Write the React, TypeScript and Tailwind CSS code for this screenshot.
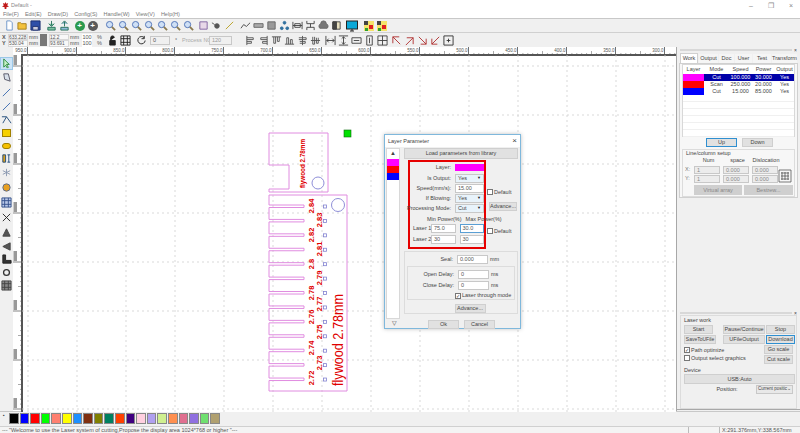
import type { ReactNode } from 'react'

type IconProps = { d?: string; fill?: string; stroke?: string; children?: ReactNode }

// 12x12 toolbar glyph
function Ico({ d, fill = 'none', stroke = '#33507a', children }: IconProps) {
  return (
    <svg viewBox="0 0 12 12" className="w-[11px] h-[11px]" fill={fill} stroke={stroke} strokeWidth={1}>
      {d && <path d={d} />}
      {children}
    </svg>
  )
}

function Slot({ children, className = '' }: { children?: ReactNode; className?: string }) {
  return <div className={`w-[13px] h-[13px] flex items-center justify-center shrink-0 ${className}`}>{children}</div>
}

function Zoom() {
  return (
    <Ico stroke="#4a6fb5">
      <circle cx="5" cy="5" r="3.4" fill="#cfe0f5" />
      <path d="M7.5 7.5 L11 11" strokeWidth={2} stroke="#8a7a50" />
    </Ico>
  )
}

const alignIcons = [
  'M2 1v10M2 3h7v2H2M2 7h5v2H2',
  'M10 1v10M10 3H3v2h7M10 7H5v2h5',
  'M1 2h10M3 2v7h2V2M7 2v5h2V2',
  'M1 10h10M3 10V3h2v7M7 10V5h2v5',
  'M6 1v10M2 3h8v2H2M3 7h6v2H3',
  'M1 6h10M3 2v8h2V2M7 3v6h2V3',
]
const sizeIcons = [
  'M1 1v10M11 1v10M2 6h8M2 6l2-2M2 6l2 2M10 6L8 4M10 6L8 8',
  'M1 1h10M1 11h10M6 2v8M6 2L4 4M6 2l2 2M6 10L4 8M6 10l2-2',
  'M1 3h10v6H1zM3 6h6',
  'M3 1h6v10H3zM6 3v6',
  'M1 1h10v10H1zM6 1v10M1 6h10',
]
const moveIcons = ['M9 2H2v7M2 2l8 8', 'M3 3h7v7M10 3L2 11', 'M2 2l8 8M10 4v6H4', 'M10 2L2 10M2 4v6h6', 'M1 1h10v10H1zM4 6h4M6 4v4']

function Field({ value, className = '' }: { value: string; className?: string }) {
  return (
    <div className={`h-[9px] bg-white border border-[#c8c8c8] px-[2px] text-[5.5px] leading-[7px] text-[#555] overflow-hidden ${className}`}>
      {value}
    </div>
  )
}

function CoordBlock({ a, b }: { a: string; b: string }) {
  return (
    <div className="flex flex-col w-[20px] text-[4.8px] leading-[5.5px] text-[#555] shrink-0">
      <span className="bg-[#f8f8f8] border border-[#d8d8d8] h-[6.5px] overflow-hidden">{a}</span>
      <span className="bg-[#f8f8f8] border border-[#d8d8d8] h-[6.5px] overflow-hidden">{b}</span>
    </div>
  )
}

function Toolbars() {
  return (
    <>
      <div className="h-[14px] flex items-center pl-[3px] border-b border-[#d0d0d0]">
        <Slot><Ico d="M3 1h4l2 2v8H3z" fill="#fff" stroke="#6b94c8" /></Slot>
        <Slot><Ico d="M1 10V3h3l1 1h5v6z" fill="#f3c23d" stroke="#a57f1c" /></Slot>
        <Slot><Ico d="M1 1h10v10H1z" fill="#2f4fa8" stroke="#1d2f70"><path d="M3 7h6v4H3z" fill="#ccd" /></Ico></Slot>
        <div className="w-[3px]" />
        <Slot><Ico d="M6 1v5M3 4l3 3 3-3M2 8h8v3H2z" fill="#7cc0a0" stroke="#25715a" /></Slot>
        <Slot><Ico d="M6 7V2M3 4l3-3 3 3M2 8h8v3H2z" fill="#8fb9d8" stroke="#25715a" /></Slot>
        <div className="w-[2px]" />
        <Slot><div className="w-[10px] h-[10px] rounded-full bg-[#2d9a4f] text-white text-[8px] leading-[9px] text-center font-bold">+</div></Slot>
        <Slot><div className="w-[10px] h-[10px] rounded-full bg-[#5a5a5a] text-white text-[8px] leading-[9px] text-center font-bold">+</div></Slot>
        <div className="w-[5px]" />
        {[0, 1, 2, 3, 4, 5, 6].map(i => <Slot key={i}><Zoom /></Slot>)}
        <div className="w-[2px]" />
        <Slot><Ico d="M2 2h8v8H2z" fill="#e8d8e8" stroke="#8060a0" /></Slot>
        <Slot><Ico fill="#555" stroke="#555"><circle cx="6.5" cy="6.5" r="2.5" /><path d="M1 3l3 2" /></Ico></Slot>
        <Slot><Ico d="M2 10L10 2" stroke="#b8a020" fill="none" /></Slot>
        <div className="w-[3px]" />
        <Slot><Ico d="M1 9l3-4 3 2 4-4" stroke="#444" /></Slot>
        <Slot><Ico d="M1 4h10v4H1z" fill="#aaa" stroke="#666" /></Slot>
        <Slot><Ico d="M2 2h8v8H2z" fill="#999" stroke="#666" /></Slot>
        <Slot><Ico fill="#2e6f9e" stroke="#2e6f9e"><circle cx="6" cy="3" r="1.5" /><circle cx="3" cy="9" r="1.5" /><circle cx="9" cy="9" r="1.5" /></Ico></Slot>
        <Slot><Ico d="M1 2v8M11 2v8M1 6h10M3 4h6v4H3z" stroke="#444" /></Slot>
        <Slot><Ico d="M2 1v3h8V1M2 11V8h8v3M6 4v4" stroke="#444" /></Slot>
        <Slot><Ico d="M2 9a3 3 0 0 1 1-5 3 3 0 0 1 6 0 3 3 0 0 1 1 5z" fill="#777" stroke="#666" /></Slot>
        <Slot><Ico d="M2 2h8v8H2z" fill="#e8e0c0" stroke="#444"><path d="M2 2h4v8H2z" fill="#444" /></Ico></Slot>
        <div className="w-[2px]" />
        <Slot className="w-[14px]">
          <svg viewBox="0 0 12 12" className="w-[12px] h-[12px]"><rect x="0.5" y="1" width="11" height="8" fill="#0aa8d8" stroke="#222" /><path d="M4 11h4M6 9v2" stroke="#222" /></svg>
        </Slot>
        <div className="w-[3px]" />
        {[0, 1].map(i => (
          <Slot key={i}>
            <svg viewBox="0 0 12 12" className="w-[12px] h-[12px]">
              <rect x="1" y="1" width="10" height="10" fill="#f5e36a" />
              <rect x="1" y="1" width="4" height="4" fill="#444" />
              <rect x="6" y="5" width="4" height="4" fill="#e02020" />
              <rect x="2" y="8" width="3" height="3" fill="#30a030" />
            </svg>
          </Slot>
        ))}
      </div>

      <div className="h-[14px] flex items-center pl-[2px] text-[#555] text-[5.5px] leading-[6.5px]">
        <div className="flex flex-col w-[6px] font-bold shrink-0"><span>X</span><span>Y</span></div>
        <CoordBlock a="633.228" b="530.04" />
        <div className="flex flex-col w-[11px] ml-[1px] shrink-0"><span>mm</span><span>mm</span></div>
        <div className="w-[7px] h-[12px] bg-[#777] shrink-0" />
        <div className="w-[2px] shrink-0" />
        <CoordBlock a="12.2" b="93.691" />
        <div className="flex flex-col w-[11px] ml-[1px] shrink-0"><span>mm</span><span>mm</span></div>
        <div className="flex flex-col w-[10px] ml-[1px] text-center shrink-0"><span className="bg-white">100</span><span className="bg-white">100</span></div>
        <div className="flex flex-col w-[6px] ml-[5px] shrink-0"><span>%</span><span>%</span></div>
        <div className="w-[3px] shrink-0" />
        <Slot><Ico d="M3 6h6v5H3zM4 6V3a2 2 0 0 1 4 0" fill="#222" stroke="#222" /></Slot>
        <Slot><Ico d="M1 1h10v10H1zM4 1v10M8 1v10M1 4h10M1 8h10" stroke="#222" /></Slot>
        <div className="w-[2px] shrink-0" />
        <Slot className="w-[14px]"><Ico d="M9 3a4 4 0 1 0 1 3M9 1v3H6" stroke="#222" /></Slot>
        <Field value="0" className="w-[20px] ml-[2px] !bg-[#f0f0f0] shrink-0" />
        <span className="w-[12px] text-center shrink-0">°</span>
        <span className="w-[27px] text-[#aaa] whitespace-nowrap shrink-0">Process NO:</span>
        <Field value="120" className="w-[23px] !bg-[#f0f0f0] !text-[#999] shrink-0" />
        <div className="w-[12px] shrink-0" />
        {alignIcons.map(d => <Slot key={d}><Ico d={d} stroke="#555" /></Slot>)}
        <div className="w-[2px] shrink-0" />
        {sizeIcons.map(d => <Slot key={d}><Ico d={d} stroke="#444" /></Slot>)}
        <div className="w-[1px] shrink-0" />
        {moveIcons.map((d, i) => <Slot key={d}><Ico d={d} stroke={i < 4 ? '#b03030' : '#333'} /></Slot>)}
      </div>
    </>
  )
}

const leftTools: { h: string; el: ReactNode }[] = [
  { h: 'h-[14px]', el: <div className="w-[13px] h-[13px] bg-[#cce4f7] border border-[#9cc8e8] flex items-center justify-center"><Ico d="M3 1v9l2-2 2 3 1-1-2-3h3z" fill="#c8f0c8" stroke="#2a8a3a" /></div> },
  { h: 'h-[15px]', el: <Ico d="M3 2h5l2 8-6-2z" fill="#d8e0ea" stroke="#556" /> },
  { h: 'h-[15px]', el: <Ico d="M2 10L10 2" stroke="#3a6ab0" /> },
  { h: 'h-[13px]', el: <Ico d="M2 10L10 2" stroke="#3a6ab0" /> },
  { h: 'h-[13px]', el: <Ico d="M1 3h5l5 7M6 3l-4 7" stroke="#204a7a" /> },
  { h: 'h-[13px]', el: <div className="w-[9px] h-[8px] bg-[#f6d000] border border-[#a08000]" /> },
  { h: 'h-[13px]', el: <div className="w-[9px] h-[6px] rounded-full bg-[#f6c000] border border-[#a08000]" /> },
  { h: 'h-[13px]', el: <Ico d="M2 2h3v8H2zM7 2h3M8.500 2v8M7 10h3" fill="#d8a020" stroke="#204a7a" /> },
  { h: 'h-[15px]', el: <Ico d="M6 2v8M2 4l8 4M10 4l-8 4" stroke="#8a98b0" /> },
  { h: 'h-[15px]', el: <Ico fill="#e8a020" stroke="#5a6a8a"><circle cx="6" cy="6" r="4" /></Ico> },
  { h: 'h-[15px]', el: <Ico d="M1 1h10v10H1zM4 1v10M8 1v10M1 4h10M1 8h10" fill="#b8c8e8" stroke="#33508a" /> },
  { h: 'h-[15px]', el: <Ico d="M2 2l8 8M10 2l-8 8" stroke="#222" /> },
  { h: 'h-[14px]', el: <Ico d="M6 2l4 8H2z" fill="#555" stroke="#444" /> },
  { h: 'h-[14px]', el: <Ico d="M2 6l8-4v8z" fill="#555" stroke="#444" /> },
  { h: 'h-[13px]', el: <Ico d="M2 1h3v6h6v3H2z" fill="#333" stroke="#222" /> },
  { h: 'h-[13px]', el: <Ico stroke="#333"><circle cx="6" cy="6" r="3.200" strokeWidth={1.400} /></Ico> },
  { h: 'h-[13px]', el: <Ico d="M1 1h10v10H1zM4 1v10M8 1v10M1 4h10M1 8h10" fill="#888" stroke="#444" /> },
]

function LeftBar() {
  return (
    <div className="w-[13px] flex flex-col items-center pt-[1px] shrink-0 bg-[#f0f0f0]">
      {leftTools.map((t, i) => (
        <div key={i} className={`${t.h} w-full flex items-center justify-center`}>{t.el}</div>
      ))}
    </div>
  )
}

const hLabels = ['950.0', '900.0', '850.0', '800.0', '750.0', '700.0', '650.0', '600.0', '550.0', '500.0', '450.0', '400.0', '350.0', '300.0']
const gridX = Array.from({ length: 14 }, (_, i) => 28 + 49 * i)
const gridY = Array.from({ length: 8 }, (_, i) => 65 + 49 * i)

function TopRuler() {
  return (
    <svg viewBox="13 46 663 8" className="w-[663px] h-[8px] block bg-white">
      {gridX.map((x, i) => (
        <g key={x}>
          <path d={`M${x - 0.500} 46v8`} stroke="#333" strokeWidth={0.700} />
          {[1, 2, 3, 4, 5, 6, 7, 8, 9].map(k => (
            <path key={k} d={`M${x + k * 4.900} ${k === 5 ? 50 : 52}V54`} stroke="#555" strokeWidth={0.500} />
          ))}
          <text x={x - 1.500} y={51} fontSize={4.500} textAnchor="end" fill="#555" fontFamily="Liberation Sans">{hLabels[i]}</text>
        </g>
      ))}
    </svg>
  )
}

function SideRuler() {
  return (
    <svg viewBox="13 54 9 357" className="w-[9px] h-[357px] block bg-white shrink-0">
      {gridY.map(y => (
        <g key={y}>
          <path d={`M13 ${y}h9`} stroke="#333" strokeWidth={0.600} />
          {[1, 2, 3, 4, 5, 6, 7, 8, 9].map(k => (
            <path key={k} d={`M${k === 5 ? 18 : 20} ${y + k * 4.900}H22`} stroke="#555" strokeWidth={0.500} />
          ))}
          <rect x={13.500} y={y - 11} width={3.500} height={10} fill="#999" />
        </g>
      ))}
    </svg>
  )
}

const slotYs = Array.from({ length: 13 }, (_, i) => 204 + 14.420 * i)
const thickness = [
  { t: '2.84', x: 311, y: 205 }, { t: '2.83', x: 319, y: 219 }, { t: '2.82', x: 311, y: 234 },
  { t: '2.81', x: 319, y: 248 }, { t: '2.8', x: 311, y: 263 }, { t: '2.79', x: 319, y: 277 },
  { t: '2.78', x: 311, y: 292 }, { t: '2.77', x: 319, y: 303 }, { t: '2.76', x: 311, y: 316 },
  { t: '2.75', x: 319, y: 331 }, { t: '2.74', x: 311, y: 347 }, { t: '2.73', x: 319, y: 362 },
  { t: '2.72', x: 311, y: 377 },
]

function Drawing() {
  const comb = 'M269 194' + slotYs.map(y => `V${y}H304V${y + 2.500}H269`).join('') + 'V390H347V194H269'
  return (
    <svg viewBox="22 54 654 357" className="absolute inset-0 w-[654px] h-[357px]">
      {gridX.map(x => <path key={x} d={`M${x} 54V411`} stroke="#cfcfcf" strokeWidth={0.800} strokeDasharray="2 3" />)}
      {gridY.map(y => <path key={y} d={`M22 ${y}H676`} stroke="#cfcfcf" strokeWidth={0.800} strokeDasharray="2 3" />)}
      <path d="M269 132H328V191H269V188H289V164H269Z" fill="none" stroke="#e08ce0" strokeWidth={1} />
      <path d={comb} fill="none" stroke="#e08ce0" strokeWidth={1} />
      <circle cx={318} cy={182} r={6} fill="#fff" stroke="#8f8fd8" />
      <circle cx={338} cy={204} r={6.500} fill="#fff" stroke="#8f8fd8" />
      {slotYs.map(y => <rect key={y} x={323.500} y={y} width={3} height={3} fill="#fff" stroke="#8080d0" strokeWidth={0.800} />)}
      <rect x={344} y={129} width={7} height={7} fill="#00e000" stroke="#0a6a0a" strokeWidth={0.600} />
      <g fill="#e00000" fontFamily="Liberation Sans" fontWeight={700}>
        <text transform="translate(305 187) rotate(-90)" fontSize={8} textLength={49} lengthAdjust="spacingAndGlyphs">flywood 2.78mm</text>
        {thickness.map(l => (
          <text key={l.t} transform={`translate(${l.x + 3} ${l.y}) rotate(-90)`} fontSize={7.500} textAnchor="middle">{l.t}</text>
        ))}
      </g>
      <text transform="translate(343 385) rotate(-90)" fill="#e00000" fontFamily="Liberation Sans" fontSize={14} textLength={92} lengthAdjust="spacingAndGlyphs">flywood 2.78mm</text>
    </svg>
  )
}

function Btn({ label, className = '' }: { label: string; className?: string }) {
  return (
    <div className={`h-[9px] bg-[#e1e1e1] border border-[#cfcfcf] text-[5.5px] leading-[7px] text-center text-[#444] whitespace-nowrap overflow-hidden shrink-0 ${className}`}>
      {label}
    </div>
  )
}

function Check({ on = false }: { on?: boolean }) {
  return (
    <span className="w-[6px] h-[6px] bg-white border border-[#777] shrink-0 text-[5px] leading-[4px] text-center text-[#333] inline-block">
      {on ? '✓' : ''}
    </span>
  )
}

function Label({ children }: { children: ReactNode }) {
  return <span className="w-[50px] text-right pr-[4px] shrink-0 text-[5.5px] text-[#444] whitespace-nowrap">{children}</span>
}

function Select({ value }: { value: string }) {
  return (
    <div className="w-[32px] h-[9px] bg-[#e8f3fb] border border-[#c8c8c8] flex items-center justify-between px-[2px] text-[5.5px] text-[#444]">
      {value}<span className="text-[4px] text-[#222]">▼</span>
    </div>
  )
}

function LayerDialog() {
  return (
    <div className="absolute left-[362px] top-[79px] w-[137px] h-[195px] bg-[#f0f0f0] border border-[#7fb8dc] shadow-[0_0_4px_rgba(0,0,0,0.25)] flex flex-col text-[#444]">
      <div className="h-[12px] bg-white flex items-center justify-between pl-[3px] pr-[3px] text-[5.5px] shrink-0">
        <span>Layer Parameter</span>
        <span className="text-[8px] leading-none text-[#444]">×</span>
      </div>
      <div className="flex flex-1 min-h-0">
        <div className="w-[14px] ml-[1px] mt-[1px] mb-[9px] bg-white border border-[#d8d8d8] flex flex-col relative shrink-0">
          <div className="h-[10px] text-[6px] leading-[9px] text-center text-[#444]">▲</div>
          <div className="h-[7px] bg-[#ff00ff]" />
          <div className="h-[7px] bg-[#ff0000]" />
          <div className="h-[7px] bg-[#0000ff]" />
        </div>
        <div className="absolute left-[3px] bottom-[1px] w-[12px] text-[6px] leading-[7px] text-center">▽</div>
        <div className="flex-1 min-w-0 flex flex-col pl-[4px] pr-[2px] pt-[1px]">
          <Btn label="Load parameters from library" className="!h-[11px] !leading-[9px] w-[114px]" />

          {/* bloque rojo */}
          <div className="mt-[1px] ml-[4px] w-[78px] h-[89px] border-[2px] border-[#e60000] pt-[1px] shrink-0 relative">
            <div className="flex h-[9px] items-center -ml-[5px]">
              <Label>Layer:</Label>
              <div className="w-[32px] h-[7px] bg-[#ff00ff]" />
            </div>
            <div className="flex h-[10px] items-center -ml-[5px] mt-[1px]"><Label>Is Output:</Label><Select value="Yes" /></div>
            <div className="flex h-[10px] items-center -ml-[5px]"><Label>Speed(mm/s):</Label><Field value="15.00" className="w-[32px]" /></div>
            <div className="flex h-[10px] items-center -ml-[5px]"><Label>If Blowing:</Label><Select value="Yes" /></div>
            <div className="flex h-[10px] items-center -ml-[5px]"><Label>Processing Mode:</Label><Select value="Cut" /></div>
            <div className="mt-[2px] h-[8px] flex text-[5.5px] leading-[8px] pl-[17px] gap-[4px] whitespace-nowrap"><span>Min Power(%)</span><span>Max Power(%)</span></div>
            <div className="flex h-[11px] items-center text-[5.5px] pl-[3px] whitespace-nowrap">
              <span className="w-[18px] shrink-0">Laser 1:</span>
              <Field value="75.0" className="w-[25px]" />
              <Field value="30.0" className="w-[25px] ml-[4px] !border-[#5a9fd4]" />
            </div>
            <div className="flex h-[11px] items-center text-[5.5px] pl-[3px] whitespace-nowrap">
              <span className="w-[18px] shrink-0">Laser 2:</span>
              <Field value="30" className="w-[25px]" />
              <Field value="30" className="w-[25px] ml-[4px]" />
            </div>
            <div className="absolute left-[77px] top-[26px] flex items-center gap-[1px] text-[5.5px]"><Check /><span>Default</span></div>
            <div className="absolute left-[77px] top-[65px] flex items-center gap-[1px] text-[5.5px]"><Check /><span>Default</span></div>
            <Btn label="Advance..." className="absolute left-[79px] top-[40px] w-[28px]" />
          </div>

          <div className="mt-[2px] w-[114px] h-[67px] border border-[#dcdcdc] flex flex-col px-[2px] pt-[2px]">
            <div className="flex h-[10px] items-center">
              <Label>Seal:</Label>
              <Field value="0.000" className="w-[31px]" />
              <span className="text-[5.5px] ml-[2px]">mm</span>
            </div>
            <div className="mt-[2px] border border-[#dcdcdc] h-[34px] pt-[2px]">
              <div className="flex h-[11px] items-center">
                <Label>Open Delay:</Label>
                <Field value="0" className="w-[31px]" />
                <span className="text-[5.5px] ml-[2px]">ms</span>
              </div>
              <div className="flex h-[11px] items-center">
                <Label>Close Delay:</Label>
                <Field value="0" className="w-[31px]" />
                <span className="text-[5.5px] ml-[2px]">ms</span>
              </div>
              <div className="flex h-[9px] items-center pl-[47px] gap-[1px] text-[5.5px] whitespace-nowrap"><Check on /><span>Laser through mode</span></div>
            </div>
            <div className="flex justify-center mt-[4px] pl-[18px]"><Btn label="Advance..." className="w-[31px]" /></div>
          </div>
          <div className="flex mt-[6px] pl-[24px] gap-[5px]">
            <Btn label="Ok" className="w-[31px]" />
            <Btn label="Cancel" className="w-[31px]" />
          </div>
        </div>
      </div>
    </div>
  )
}

const layers = [
  { color: 'bg-[#ff00ff]', mode: 'Cut', speed: '100.000', power: '30.000', out: 'Yes', sel: true },
  { color: 'bg-[#ff0000]', mode: 'Scan', speed: '250.000', power: '20.000', out: 'Yes', sel: false },
  { color: 'bg-[#0000ff]', mode: 'Cut', speed: '15.000', power: '85.000', out: 'Yes', sel: false },
]

const tabs = [
  { t: 'Work', w: 'w-[18px]' }, { t: 'Output', w: 'w-[19px]' }, { t: 'Doc', w: 'w-[15px]' },
  { t: 'User', w: 'w-[17px]' }, { t: 'Test', w: 'w-[18px]' }, { t: 'Transform', w: 'w-[25px]' },
]

function RightPanel() {
  return (
    <div className="w-[124px] shrink-0 bg-[#f0f0f0] border-l border-[#a8a8a8] flex flex-col text-[5.5px] text-[#444]">
      <div className="h-[6px] flex items-center px-[3px] gap-[2px]">
        <div className="flex-1 h-[2px] bg-[#d8d8d8]" />
        <span className="text-[5px] leading-none">×</span>
      </div>
      <div className="flex h-[10px] pl-[3px] items-end gap-[1px] whitespace-nowrap">
        {tabs.map((tab, i) => (
          <div key={tab.t} className={`${tab.w} text-center ${i === 0 ? 'h-[10px] bg-white border border-b-0 border-[#d0d0d0] leading-[9px]' : 'h-[9px] leading-[9px] bg-[#f5f5f5]'}`}>{tab.t}</div>
        ))}
      </div>
      <div className="mx-[2px] h-[135px] border border-[#d0d0d0] bg-[#f7f7f7] px-[2px] flex flex-col">
        <div className="h-[73px] bg-white border border-[#d8d8d8] shrink-0">
          <div className="grid grid-cols-[21px_25px_23px_23px_1fr] h-[9px] items-center text-center">
            <span>Layer</span><span>Mode</span><span>Speed</span><span>Power</span><span>Output</span>
          </div>
          {layers.map(l => (
            <div key={l.speed} className="grid grid-cols-[21px_25px_23px_23px_1fr] h-[7px] leading-[7px] text-center">
              <span className={l.color} />
              {[l.mode, l.speed, l.power, l.out].map((v, i) => (
                <span key={i} className={l.sel ? 'bg-[#0000a8] text-white' : ''}>{v}</span>
              ))}
            </div>
          ))}
          {[0, 1, 2, 3, 4, 5].map(i => <div key={i} className="h-[7px] border-b border-[#f0f0f0]" />)}
        </div>
        <div className="flex justify-center gap-[5px] mt-[1px] pl-[2px] shrink-0">
          <Btn label="Up" className="w-[31px] !border-[#2f8fd0]" />
          <Btn label="Down" className="w-[31px]" />
        </div>
        <div className="mt-[2px] flex-1 border border-[#dcdcdc] px-[1px] relative">
          <div className="h-[6px] leading-[6px] pl-[2px]">Line/column setup</div>
          <div className="grid grid-cols-[10px_29px_29px_28px] h-[9px] leading-[9px] text-center">
            <span /><span>Num</span><span>space</span><span>Dislocation</span>
          </div>
          {['X:', 'Y:'].map((axis, i) => (
            <div key={axis} className="flex items-center h-[9px] gap-[3px]">
              <span className="w-[7px] text-[#777] pl-[1px]">{axis}</span>
              <Field value="1" className="w-[26px] !h-[8px] !leading-[6px] !bg-[#ececec] !text-[#888]" />
              <Field value="0.000" className="w-[26px] !h-[8px] !leading-[6px] !bg-[#ececec] !text-[#888]" />
              <Field value="0.000" className="w-[26px] !h-[8px] !leading-[6px] !bg-[#ececec] !text-[#888]" />
              {i === 0 && (
                <svg viewBox="0 0 14 14" className="absolute right-[2px] top-[19px] w-[14px] h-[14px]" fill="none" stroke="#444" strokeWidth={0.700}>
                  <path d="M1 1h12v12H1zM3 4h8M3 7h8M3 10h8M4 3v8M7 3v8M10 3v8" />
                </svg>
              )}
            </div>
          ))}
          <div className="flex mt-[2px] pl-[10px] gap-[2px]">
            <div className="w-[50px] h-[10px] bg-[#cfcfcf] text-[#888] leading-[10px] text-center">Virtual array</div>
            <div className="w-[51px] h-[10px] bg-[#cfcfcf] text-[#888] leading-[10px] text-center">Bestrew...</div>
          </div>
        </div>
      </div>
      <div className="flex-1" />
      <div className="h-[99px] border-b border-[#a8a8a8] flex flex-col px-[3px] mb-[1px] relative">
        <div className="h-[4px] flex items-center gap-[2px] shrink-0">
          <div className="flex-1 h-[2px] bg-[#d8d8d8]" />
          <span className="text-[5px] leading-none">×</span>
        </div>
        <div className="flex-1 border border-[#dcdcdc] px-[3px]">
          <div className="h-[8px] leading-[8px]">Laser work</div>
          <div className="flex gap-[10px] mt-[1px]">
            <Btn label="Start" className="w-[29px]" />
            <div className="flex gap-[1px]">
              <Btn label="Pause/Continue" className="w-[42px]" />
              <Btn label="Stop" className="w-[29px]" />
            </div>
          </div>
          <div className="flex gap-[7px] mt-[1px]">
            <Btn label="SaveToUFile" className="w-[32px] !text-[5px]" />
            <div className="flex gap-[1px]">
              <Btn label="UFileOutput" className="w-[42px]" />
              <Btn label="Download" className="w-[29px] !border-[#2f8fd0]" />
            </div>
          </div>
          <div className="flex justify-between mt-[1px]">
            <div className="flex flex-col mt-[1px]">
              <div className="flex items-center gap-[1px] h-[8px]"><Check on /><span>Path optimize</span></div>
              <div className="flex items-center gap-[1px] h-[8px]"><Check /><span>Output select graphics</span></div>
            </div>
            <div className="flex flex-col gap-[1px]">
              <Btn label="Go scale" className="w-[29px]" />
              <Btn label="Cut scale" className="w-[29px]" />
            </div>
          </div>
          <div className="mt-[2px] h-[8px] leading-[8px]">Device</div>
          <Btn label="USB:Auto" className="w-[111px] !h-[10px] !leading-[8px]" />
          <div className="flex items-center mt-[1px]">
            <span className="w-[74px] text-center pl-[14px]">Position:</span>
            <div className="w-[38px] h-[9px] bg-[#e8e8e8] border border-[#c8c8c8] px-[1px] flex items-center justify-between text-[4.5px] whitespace-nowrap">
              <span>Current positic</span><span>⌄</span>
            </div>
          </div>
        </div>
      </div>
    </div>
  )
}

const palette = ['#000000', '#0000ff', '#ff0000', '#00ff00', '#ff8070', '#ffff00', '#1e90ff', '#803010', '#808000', '#008060', '#ff4000', '#400080', '#ffd0e0', '#b0a0f0', '#d0f090', '#ff9050', '#e07090', '#9070e0', '#70e070', '#b0a070']

export default function App() {
  return (
    <div className="w-[800px] h-[433px] overflow-hidden flex flex-col bg-[#f0f0f0] [font-family:'Liberation_Sans',Arial,sans-serif]">
      <div className="h-[10px] bg-white flex items-center pl-[2px] text-[5.5px] text-[#888] shrink-0 relative">
        <svg viewBox="0 0 8 8" className="w-[7px] h-[7px] mr-[2px]"><path d="M4 0l1 2 2-1-1 3 2 1-3 1v2H3V6L0 5l2-1-1-3 2 1z" fill="#c01818" /></svg>
        Default -
        <div className="ml-auto flex gap-[15px] pr-[7px] text-[7px] text-[#888] leading-none">
          <span>–</span><span>❐</span><span>×</span>
        </div>
      </div>
      <div className="h-[8px] bg-white flex items-center gap-[6px] pl-[3px] text-[5.5px] text-[#777] border-b border-[#c8c8c8] box-content shrink-0">
        {['File(F)', 'Edit(E)', 'Draw(D)', 'Config(S)', 'Handle(W)', 'View(V)', 'Help(H)'].map(m => <span key={m}>{m}</span>)}
      </div>
      <Toolbars />

      <div className="flex flex-1 min-h-0">
        <div className="flex flex-col w-[676px] shrink-0">
          <div className="flex h-[8px] pl-[13px] shrink-0"><TopRuler /></div>
          <div className="flex h-[357px]">
            <LeftBar />
            <SideRuler />
            <div className="relative flex-1 bg-white border-t-2 border-l-2 border-[#555] -mt-[1px] -ml-[1px]">
              <div className="absolute -top-[1px] -left-[1px] w-[654px] h-[357px]">
                <Drawing />
                <LayerDialog />
              </div>
            </div>
          </div>
        </div>
        <RightPanel />
      </div>

      <div className="h-[16px] flex items-start pt-[1px] pl-[3px] shrink-0 border-t border-[#c8c8c8]">
        <div className="w-[6px] text-[5px] text-[#444] leading-none">▪</div>
        <div className="flex gap-[1px]">
          {palette.map(c => (
            <div key={c} className="w-[9.6px] h-[11px] border border-[#888]" style={{ backgroundColor: c }} />
          ))}
        </div>
      </div>
      <div className="h-[6px] bg-[#f4f4f4] flex items-center text-[5.5px] text-[#555] pl-[2px] whitespace-nowrap shrink-0 relative overflow-hidden border-t border-[#d0d0d0] box-content -mt-[1px]">
        <span>--- "Welcome to use the Laser system of cutting,Propose the display area 1024*768 or higher "---</span>
        <span className="absolute left-[688px] top-0 h-full w-[32px] border-x border-[#bbb]" />
        <span className="absolute left-[721px] pl-[1px] bg-[#f4f4f4]">X:291.376mm,Y:338.567mm</span>
      </div>
    </div>
  )
}
